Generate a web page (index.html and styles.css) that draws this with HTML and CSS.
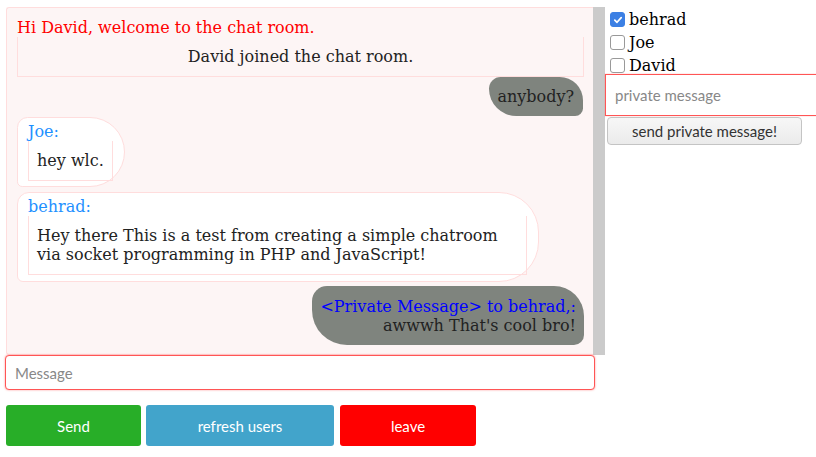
FILE: index.html
```html
<!DOCTYPE html>
<html>
<head>
<meta charset="utf-8">
<link rel="stylesheet" href="styles.css">
</head>
<body>
<div class="page">
  <div class="main">
    <div class="chat">
      <div class="messages">
        <div class="welcome">Hi David, welcome to the chat room.</div>
        <div class="notice">David joined the chat room.</div>
        <div class="row right"><div class="bubble self">anybody?</div></div>
        <div class="row first"><div class="bubble other"><div class="name">Joe:</div><div class="body">hey wlc.</div></div></div>
        <div class="row next"><div class="bubble other"><div class="name">behrad:</div><div class="body">Hey there This is a test from creating a simple chatroom via socket programming in PHP and JavaScript!</div></div></div>
        <div class="row right"><div class="bubble self private"><div class="pm">&lt;Private Message&gt; to behrad,:</div><div>awwwh That's cool bro!</div></div></div>
      </div>
      <div class="scrollbar"></div>
    </div>
    <input class="msg" type="text" placeholder="Message">
    <div class="actions">
      <button class="btn send">Send</button>
      <button class="btn refresh">refresh users</button>
      <button class="btn leave">leave</button>
    </div>
  </div>
  <div class="side">
    <label class="user"><span class="box checked"><svg viewBox="0 0 14 14" width="10" height="10"><path d="M2.5 7.2 L5.6 10.2 L11.5 3.6" fill="none" stroke="#fff" stroke-width="2.4" stroke-linecap="round" stroke-linejoin="round"/></svg></span><span>behrad</span></label>
    <label class="user"><span class="box"></span><span>Joe</span></label>
    <label class="user"><span class="box"></span><span>David</span></label>
    <input class="pmsg" type="text" placeholder="private message">
    <button class="pbtn">send private message!</button>
  </div>
</div>
</body>
</html>
```

FILE: styles.css
```css
html, body {
  margin: 0;
  padding: 0;
  background: #fff;
  overflow: hidden;
}

.page {
  display: flex;
  align-items: flex-start;
  padding: 7px 0 0 6px;
  width: 900px;
}

.main {
  width: 599px;
  display: flex;
  flex-direction: column;
}

.chat {
  display: flex;
  height: 348px;
}

.messages {
  flex: 1;
  border: 1px solid #fdd;
  border-right: none;
  border-radius: 3px 0 0 3px;
  background: #fdf5f5;
  padding: 10px 9px 0 10px;
  font-family: "DejaVu Serif", serif;
  font-size: 16px;
  line-height: 19px;
  color: #222;
  overflow: hidden;
}

.scrollbar {
  width: 12px;
  background: #cbcbcb;
}

.welcome {
  color: #f00;
}

.notice {
  border: 1px solid #fdd;
  border-top: none;
  padding: 10px;
  text-align: center;
}

.row {
  display: flex;
}

.row.right {
  justify-content: flex-end;
}

.row.first {
  margin-top: 1px;
}

.row.next {
  margin-top: 5px;
}

.bubble {
  max-width: 92%;
  box-sizing: border-box;
}

.self {
  background: #7f847e;
  padding: 10px 9px 10px 8px;
  text-align: right;
  border-radius: 15px 30px 10px 35px;
  margin-right: 1px;
}

.private {
  margin-top: 4px;
  padding: 11px 8px 10px 8px;
  margin-right: 0;
}

.pm {
  color: #00f;
}

.other {
  background: #fff;
  border: 1px solid #fdd;
  border-radius: 12px 40px 40px 6px;
  padding: 4px 11px 5px 10px;
}

.row.next .other {
  padding-bottom: 6px;
}

.name {
  color: #1e90ff;
}

.body {
  border: 1px solid #fdd;
  border-top: none;
  padding: 10px 8px;
}

.msg {
  box-sizing: border-box;
  width: 590px;
  height: 35px;
  margin: 0;
  margin-left: -1px;
  border: 1px solid #f55;
  border-radius: 4px;
  box-shadow: 0 0 2px rgba(255, 60, 60, 0.6);
  padding: 0 9px;
  font-family: Lato, sans-serif;
  font-size: 15px;
  outline: none;
}

.msg::placeholder, .pmsg::placeholder {
  color: #888;
}

.actions {
  display: flex;
  gap: 5px;
  margin-top: 15px;
}

.btn {
  height: 41px;
  border: none;
  border-radius: 3px;
  color: #fff;
  font-family: Lato, sans-serif;
  font-size: 15px;
  padding: 0;
}

.send {
  width: 135px;
  background: #28ae28;
}

.refresh {
  width: 188px;
  background: #42a4cb;
}

.leave {
  width: 136px;
  margin-left: 1px;
  background: #f00;
}

.side {
  display: flex;
  flex-direction: column;
  align-items: flex-start;
  font-family: "DejaVu Serif", serif;
  font-size: 16px;
  color: #000;
}

.user {
  display: flex;
  align-items: center;
  height: 23px;
  padding-left: 5px;
}

.user:first-child {
  margin-top: 1px;
}

.box {
  box-sizing: border-box;
  width: 15px;
  height: 15px;
  margin-right: 4px;
  border: 1px solid #999;
  border-radius: 3px;
  background: #fff;
  display: flex;
  align-items: center;
  justify-content: center;
}

.box.checked {
  background: #3c80e4;
  border-color: #3c80e4;
}

.pmsg {
  box-sizing: border-box;
  width: 240px;
  height: 42px;
  margin: -3px 0 0 0;
  border: 1px solid #f55;
  border-right: none;
  box-shadow: 0 0 1px rgba(255, 60, 60, 0.5);
  padding: 0 9px;
  font-family: Lato, sans-serif;
  font-size: 15px;
  outline: none;
}

.pbtn {
  margin: 1px 0 0 2px;
  width: 195px;
  height: 28px;
  border: 1px solid #c4c4c4;
  border-radius: 4px;
  background: linear-gradient(#f7f7f7, #ebebeb);
  color: #333;
  font-family: Lato, sans-serif;
  font-size: 15px;
  padding: 0;
}
```
